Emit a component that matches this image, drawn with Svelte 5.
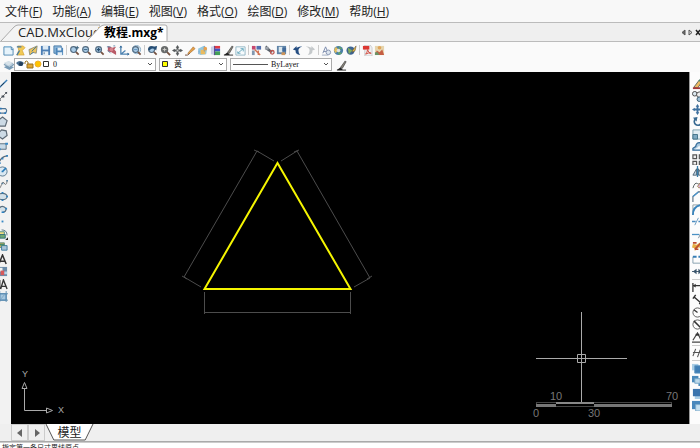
<script lang="ts">
    type Tool = { name: string; art: string } | null;

    const t = (name: string, art: string): Tool => ({ name, art });

    const lens = '<path d="M7.5 7.5l3 3" stroke="#765342" stroke-width="2"/><circle cx="5" cy="5" r="3.2" fill="#a9cbe6" stroke="#536b80" stroke-width="1.2"/>';
    const brush = '<path d="M1 11l4-3 2 2v1z" fill="#222"/><path d="M5 8l5-7 1 1-4 7z" fill="#8b877c" stroke="#333" stroke-width=".7"/><path d="M1 11h10" stroke="#222"/>';
    const disk = '<path d="M1 1h10v10H1z" fill="#4e7fb5"/><path d="M3 1h6v4H3z" fill="#dceaf5"/><path d="M3 7h6v4H3z" fill="#edf4f9"/><path d="M4 8h1v2H4z" fill="#39648f"/>';

    const menus = [
        ["文件", "F"], ["功能", "A"], ["编辑", "E"], ["视图", "V"],
        ["格式", "O"], ["绘图", "D"], ["修改", "M"], ["帮助", "H"],
    ];

    const mainTools: Tool[] = [
        t("New", '<path d="M1 2h8l2 2v7H1z" fill="#e6f3fb" stroke="#4b87b1"/><path d="M2 2h6" stroke="#8ec1df"/><path d="M9 2v3h2" fill="none" stroke="#4b87b1"/>'),
        t("Open", '<path d="M3 1h6l2 2-3 3 2 5H2l2-5z" fill="#f1c956" stroke="#ca9629" stroke-width=".6"/><path d="M2 2h5M2 11l3-5" stroke="#427aa7" stroke-width="1.4"/>'),
        t("Open cloud drawing", '<path d="M1 5l9-4-1 8-4-1-3 3z" fill="#edc45f" stroke="#6c736c" stroke-width=".7"/><path d="M4 7l5-5M3 10l3-2" stroke="#39749a"/>'),
        t("Save", disk),
        t("Save as", '<path d="M1 1h8v8H1z" fill="#8eb9dc" stroke="#4779a6"/><path d="M3 3h8v8H3z" fill="#4e86ba"/><path d="M5 3h4v3H5zM5 8h5v3H5z" fill="#e5f0f8"/>'),
        null,
        t("Zoom window", lens + '<path d="M9 1v4M7 3h4" stroke="#315b78"/>'),
        t("Zoom out", lens + '<path d="M3 5h4" stroke="#345c7b"/>'),
        t("Zoom in", lens + '<path d="M3 5h4M5 3v4" stroke="#294f70" stroke-width="1.4"/>'),
        t("Zoom extents", '<path d="M2 1v6l4 1 5 3V7L9 5l2-3-4 1z" fill="#b85a67"/><path d="M1 2h4M8 1h2M2 6l3 3" fill="none" stroke="#5687aa"/><circle cx="6" cy="5" r="2" fill="#d6838d"/>'),
        t("User coordinates", '<path d="M2 1v9h9M2 10l5-4" fill="none" stroke="#4e83b1" stroke-width="1.4"/><path d="M1 3l1-2 1 2M9 9l2 1-2 1" fill="none" stroke="#346a99"/>'),
        t("Zoom all", '<circle cx="6" cy="5" r="4.500" fill="#dce9f2" stroke="#8baec8"/>' + lens + '<path d="M3 5h4" stroke="#5e92bd"/>'),
        null,
        t("Zoom previous", lens + '<path d="M1 5q2-5 6-3l4-1-1 5-2-2q-4-1-5 2z" fill="#244d75"/>'),
        t("Zoom scale", '<path d="M7 7l4 4" stroke="#765342" stroke-width="2"/><circle cx="5" cy="5" r="4" fill="#686b6b"/><path d="M3 5h4M5 3v4" stroke="#d5d5d0"/>'),
        t("Pan", '<path d="M6 0l2 3H7v2h2V4l3 2-3 2V7H7v2h1l-2 3-2-3h1V7H3v1L0 6l3-2v1h2V3H4z" fill="#55595b"/><path d="M5 5h2v2H5z" fill="#ccc"/>'),
        t("Draw pencil", '<path d="M3 9l6-7 2 2-7 6z" fill="#e9a146" stroke="#926431" stroke-width=".6"/><path d="M0 11h3l2-2" fill="none" stroke="#6b4430"/>'),
        t("Colours", '<path d="M1 4l6-3 4 3-1 6-7 1z" fill="#93c8df"/><path d="M4 5l5 1v4H4z" fill="#ebbb5e"/><path d="M2 6v4M8 1v6" stroke="#6098c5"/><circle cx="9" cy="4" r="2" fill="#e8a04f"/>'),
        t("Layer colours", '<path d="M4 1h7v3H4z" fill="#e23b42"/><path d="M4 4h7v3H4z" fill="#4154c4"/><path d="M4 7h7v4H4z" fill="#43a057"/><path d="M1 2l4-1v10l-4-1z" fill="#c9cfe8"/><path d="M5 1v10" stroke="#503f88"/>'),
        t("Match properties", brush),
        t("Full screen", '<path d="M1 2h10v9H1z" fill="#f7fbfd" stroke="#92b6c4"/><path d="M3 9l6-5M6 4h3v3M3 7v2h3" fill="none" stroke="#66a8bc"/>'),
        null,
        t("Blocks", '<path d="M1 1h4v4H1z" fill="#c6476d"/><path d="M6 1h5v4H6z" fill="#526fae"/><path d="M1 6h3v5H1z" fill="#8198b0"/><path d="M4 5l6 6M8 6v5" stroke="#d17555" stroke-width="1.6"/>'),
        t("Cut", '<path d="M2 1l7 7M2 4l6 4" stroke="#596069" stroke-width="1.5"/><path d="M1 2h4v3H1z" fill="#9ba2ab"/><circle cx="9" cy="8" r="2" fill="none" stroke="#be5650" stroke-width="1.4"/>'),
        t("Insert image", '<path d="M1 1h10v9H1z" fill="#5f84a8"/><path d="M3 2h4v6H3z" fill="#dce8ee"/><path d="M7 3h4v4H7z" fill="#436b99"/><path d="M6 8h4v3H6z" fill="#ce955b"/>'),
        null,
        t("Undo", '<path d="M1 5l4-4v2q5-2 6-1-4 1-4 4 0 3 2 5Q3 10 4 6z" fill="#264e82"/>'),
        t("Redo", '<path d="M11 5L7 1v2Q2 1 1 2q4 1 4 4 0 3-2 5 6-1 5-5z" fill="#c5c9cb"/>'),
        null,
        t("Find", '<path d="M2 9l3-7 3 7M3 7h4" fill="none" stroke="#7485a9"/><circle cx="8" cy="8" r="2.500" fill="#dce5ef" stroke="#8391af"/><path d="M1 11h7" stroke="#99a9bf"/>'),
        t("Web", '<circle cx="6" cy="6" r="5" fill="#497fa5"/><path d="M3 2l3 3-3 4-2-3z" fill="#e3bd5d"/><path d="M6 1l4 3-3 1zM6 7l4 2-4 2z" fill="#64a562"/><circle cx="6" cy="6" r="2" fill="#e1e5df"/>'),
        t("Publish", '<circle cx="5" cy="6" r="4.500" fill="#3d6492"/><path d="M2 3l5 3-4 4z" fill="#82ad5b"/><path d="M7 6l4-5-1 5-3 2z" fill="#e5b641" stroke="#625338" stroke-width=".6"/>'),
        null,
        t("PDF", '<path d="M3 0h6l2 3v9H3z" fill="#eef0f1" stroke="#b2b2b3" stroke-width=".6"/><path d="M1 1h7v4H1z" fill="#dc3732"/><path d="M4 10q2-2 2-5 1 4 4 4-3-1-6 1" fill="none" stroke="#d1493d"/>'),
        t("Picture", '<path d="M1 1h10v10H1z" fill="#e6d5ae"/><path d="M1 11l2-5 3 2 3-3 2 6z" fill="#c65e43"/><path d="M1 8h3l2 3H1z" fill="#6c9366"/><circle cx="6" cy="3" r="2" fill="#e0a55b"/>'),
    ];

    const drawTools: Tool[] = [
        t("Line", '<path d="M1 11L11 1" stroke="#397eb9" stroke-width="1.6"/><path d="M4 8l4-4" stroke="#26394a"/>'),
        t("Construction line", '<path d="M1 11L11 1" stroke="#777"/><path d="M2 10h2M5 6h3M9 2h2" stroke="#454d57" stroke-width="2"/>'),
        t("Polyline", '<path d="M2 10h7q3-3 0-5H4" fill="none" stroke="#4f7494" stroke-width="1.3"/><path d="M3 5h2M2 10h2M8 10h2" stroke="#2a78bb" stroke-width="2"/>'),
        t("Polygon", '<path d="M6 1l5 4-2 6H3L1 5z" fill="#ccdae5" stroke="#5d6a76" stroke-width="1.3"/>'),
        t("Rotated polygon", '<path d="M5 1l5 1 1 5-5 4-4-3V4z" fill="#ccdae5" stroke="#5d6a76" stroke-width="1.3"/>'),
        t("Rectangle", '<path d="M1 3h9v6H1z" fill="#c7dae8" stroke="#576c7c"/><path d="M9 3h3M1 9h3" stroke="#388ac8" stroke-width="2"/>'),
        t("Arc", '<path d="M2 10Q4 3 11 2" fill="none" stroke="#596a77" stroke-width="1.3"/><path d="M1 10h3M5 5h2M10 2h2" stroke="#3382bf" stroke-width="2"/>'),
        t("Circle", '<circle cx="6" cy="6" r="5" fill="#dae8f2" stroke="#52738b"/><path d="M6 6l4-4M5 6h2" stroke="#277ab9" stroke-width="1.8"/>'),
        t("Spline", '<path d="M1 10q3 1 4-4t4 0q2 0 2-4" fill="none" stroke="#777"/><path d="M1 9v2M5 5h2M10 2h2" stroke="#5a82a0" stroke-width="1.6"/>'),
        t("Ellipse", '<ellipse cx="6" cy="6" rx="5" ry="3.500" fill="#d3e0e8" stroke="#596e7f" stroke-width="1.3"/><path d="M5 2h2M5 10h2M10 6h2" stroke="#2d81c1" stroke-width="1.7"/>'),
        t("Elliptical arc", '<path d="M2 5q4-5 8 0 0 4-4 4" fill="#d3e0e8" stroke="#596e7f" stroke-width="1.3"/><path d="M5 9h3M9 5h2" stroke="#2d81c1" stroke-width="1.8"/>'),
        t("Point", '<path d="M5 5h2v2H5z" fill="#3687c4"/>'),
        t("Insert block", '<path d="M5 1q6 0 6 6" fill="none" stroke="#547282"/><path d="M1 3h7v5H1z" fill="#f1dc80" stroke="#4a8b85"/><path d="M3 6h6v4H3z" fill="#70a875" stroke="#356f7d"/><path d="M12 9v3H9z" fill="#222"/>'),
        t("Make block", '<path d="M1 2h7v5H1z" fill="#d6b75b" stroke="#5a877b"/><path d="M5 5h6v5H5z" fill="#abc5d8" stroke="#3a789e"/><path d="M2 4h6" stroke="#478a69" stroke-width="2"/>'),
        t("Text", '<path d="M2 11L6 1l4 10M3 8h6" fill="none" stroke="#333" stroke-width="1.6"/>'),
        t("Hatch", '<path d="M1 1h10v10H1z" fill="#6a8caa"/><path d="M2 2h4v4H2z" fill="#f0f1f0"/><path d="M4 5h4v5H4z" fill="#d8595b"/><path d="M8 6h3v3H8z" fill="#b7d4e8"/>'),
        t("Multiline text", '<path d="M4 11L7 1l4 10M5 8h5M3 1v10" fill="none" stroke="#333" stroke-width="1.5"/>'),
        t("Boundary", '<path d="M3 3h7v7H3z" fill="#a6c7df" stroke="#3e7cae"/><path d="M3 0v12M10 0v12M1 3h11M1 10h11" stroke="#5b8bae"/><path d="M4 9l5-6" stroke="#7fa4c1"/>'),
    ];

    const editTools: Tool[] = [
        t("Erase", '<path d="M2 9l6-8 3 2-5 7z" fill="#edba62" stroke="#58635d"/><path d="M1 10h10" stroke="#a33a3b" stroke-width="2"/><path d="M8 1l3 3" stroke="#4b9170" stroke-width="2"/>'),
        t("Copy", '<circle cx="3" cy="3" r="2.500" fill="#dce8ef" stroke="#444"/><circle cx="8" cy="4" r="3" fill="#eee" stroke="#444"/><circle cx="8" cy="9" r="2.500" fill="#9ec0d6" stroke="#35566e"/>'),
        t("Move", '<path d="M6 0l2 3H7v2h2V4l3 2-3 2V7H7v2h1l-2 3-2-3h1V7H3v1L0 6l3-2v1h2V3H4z" fill="#3f719f"/>'),
        t("Rotate", '<path d="M4 3a4 4 0 1 0 5 0" fill="none" stroke="#376991" stroke-width="1.8"/><path d="M1 2l5-1-1 5z" fill="#376991"/>'),
        t("Scale", '<path d="M1 1h11v10H1z" fill="#e2edf2" stroke="#7b9fac"/><path d="M1 6h5v5H1z" fill="#7faac2" stroke="#427187"/>'),
        t("Offset", '<path d="M1 10V8l3-2q1-5 5-4l3 4v4z" fill="#a8c8df" stroke="#356b98" stroke-width="1.4"/><path d="M3 9l3-2 2-2 2 4z" fill="#f0f6f9"/>'),
        t("Array", '<path d="M1 1h4v4H1zM8 1h4v4H8zM1 8h4v4H1zM8 8h4v4H8z" fill="#eee" stroke="#555" stroke-width="1.3"/>'),
        t("Mirror", '<path d="M1 10l4-7v7zM11 10L7 3v7z" fill="#bfd2e0" stroke="#4c6172"/><path d="M6 0v12" stroke="#377ca9" stroke-width="1.4"/>'),
        t("Edit polyline", '<path d="M1 10q2-7 5-5t4-3" fill="none" stroke="#4d5759"/><path d="M6 8l4-5 2 2-4 5z" fill="#d8b3d8" stroke="#a7824b"/>'),
        t("Chamfer", '<path d="M1 12V6l6-5h5" fill="none" stroke="#566b7c" stroke-width="1.2"/><path d="M1 6l6-5" stroke="#4a95cc" stroke-width="1.4"/>'),
        t("Fillet", '<path d="M1 1v11M1 1h11" stroke="#8d9a9f"/><path d="M1 12Q1 1 12 1" fill="none" stroke="#3a85bd" stroke-width="2"/>'),
        t("Trim", '<path d="M0 6h4M7 6h5" stroke="#4c8cc0" stroke-width="1.4"/><path d="M3 10l4-8" stroke="#6496bd"/>'),
        t("Extend", '<path d="M0 6h8" stroke="#4b91c4" stroke-width="1.4"/><path d="M7 10l4-8" stroke="#778a99"/>'),
        t("Explode", '<path d="M1 3l4 1 5-3-2 4 3 3-4-1-4 4V8L0 7z" fill="#e5ae45"/><path d="M3 9l7-7M1 2h4M3 9h4" stroke="#ba4b32" stroke-width="1.8"/>'),
        t("Break", '<path d="M1 3v7h11V3" fill="none" stroke="#829dac"/><path d="M1 3h4M7 3h5" stroke="#367eb5" stroke-width="2"/>'),
        t("Stretch", '<path d="M0 6h12" stroke="#3d5467"/><path d="M5 3v6L1 6zM7 3v6l4-3z" fill="#39546b"/>'),
        null,
        t("Linear dimension", '<path d="M1 1v10M1 4h11" stroke="#333" stroke-width="1.4"/><path d="M4 2v4L1 4z" fill="#333"/>'),
        t("Aligned dimension", '<path d="M2 3l8 7M1 5l3-4M8 11l3-4" stroke="#333" stroke-width="1.6"/>'),
        t("Radius dimension", '<circle cx="6" cy="6" r="5" fill="none" stroke="#555"/><path d="M6 6L2 3" stroke="#333" stroke-width="1.4"/>'),
        t("Diameter dimension", '<circle cx="6" cy="6" r="5" fill="none" stroke="#555"/><path d="M2 2l8 8" stroke="#333" stroke-width="1.7"/>'),
        t("Angular dimension", '<path d="M0 11h12M1 9l5-8 4 8" fill="none" stroke="#444" stroke-width="1.3"/><path d="M4 3h4" stroke="#333" stroke-width="2"/>'),
        null,
        t("Continue dimension", '<path d="M1 10l3-8M1 6h10M6 11l3-8M10 3h2" fill="none" stroke="#555" stroke-width="1.2"/>'),
        null,
        t("Bring to front", '<path d="M0 1h7v7H0z" fill="#a9cde6"/><path d="M3 3h8v8H3z" fill="#3f7eb5" stroke="#5c95c2"/>'),
        t("Send to back", '<path d="M0 1h7v7H0z" fill="#4b8abb"/><path d="M7 7h5v5H7z" fill="#4b8abb"/><path d="M3 4h6v5H3z" fill="#bedaeb" stroke="#73a4c6"/>'),
        t("Bring above", '<path d="M3 4h9v8H3z" fill="#a9cde6"/><path d="M1 1h9v8H1z" fill="#3973ad"/>'),
        t("Send under", '<path d="M0 1h11v9H0z" fill="#4987bc"/><path d="M4 5h8v7H4z" fill="#c5dfef" stroke="#7eabca"/>'),
    ];
</script>

{#snippet icon(art: string)}
    <svg class="icon" viewBox="0 0 12 12" aria-hidden="true">{@html art}</svg>
{/snippet}

{#snippet tools(items: Tool[])}
    {#each items as item}
        {#if item}
            <button class="tool" aria-label={item.name}>{@render icon(item.art)}</button>
        {:else}
            <span class="separator"></span>
        {/if}
    {/each}
{/snippet}

{#snippet chevron()}
    <svg class="chevron" viewBox="0 0 6 4" aria-hidden="true"><path d="M1 1l2 2 2-2" fill="none" stroke="#555" /></svg>
{/snippet}

<div class="app">
    <nav class="menu">
        {#each menus as [label, key]}
            <button>{label}(<u>{key}</u>)</button>
        {/each}
    </nav>

    <div class="documents">
        <button class="document">
            <svg class="shape" viewBox="0 0 100 17" preserveAspectRatio="none" aria-hidden="true">
                <path d="M1 17L14 3Q16 1 18 1H100V17" fill="#f4f4f4" stroke="#aaa" />
            </svg>
            <span>CAD.MxCloud</span>
        </button>
        <button class="document active">
            <svg class="shape" viewBox="0 0 82 17" preserveAspectRatio="none" aria-hidden="true">
                <path d="M1 17L14 3Q16 1 18 1H79Q81 1 81 3V17" fill="#fff" stroke="#aaa" />
            </svg>
            <span>教程.mxg*</span>
        </button>
        <div class="pager">
            <button aria-label="Previous drawing">
                <svg viewBox="0 0 5 7"><path d="M4 1v5L1 3.500z" fill="#666" stroke="#555" /></svg>
            </button>
            <button aria-label="Next drawing">
                <svg viewBox="0 0 5 7"><path d="M1 1v5l3-2.500z" fill="#ddd" stroke="#555" /></svg>
            </button>
            <button aria-label="Close drawing">
                <svg viewBox="0 0 5 7"><path d="M1 1l4 5M5 1L1 6" stroke="#222" stroke-width="1.5" /></svg>
            </button>
        </div>
    </div>

    <div class="toolbar">{@render tools(mainTools)}</div>

    <div class="properties">
        <button class="tool" aria-label="Layers">
            {@render icon('<path d="M1 8l5-3 6 3-5 3z" fill="#789bb7"/><path d="M1 5l5-3 6 3-5 3z" fill="#b9cedd" stroke="#7797af"/><path d="M1 3l5-2 5 2-5 3z" fill="#d7e2e9"/>')}
        </button>
        <div class="field layer">
            <svg class="mark" viewBox="0 0 34 10" aria-hidden="true">
                <path d="M0 4q4-4 8 0l-2 3H3z" fill="#496f91" />
                <circle cx="5" cy="5" r="2" fill="#243e5b" />
                <path d="M9 5V3q1-2 3 0v2" fill="none" stroke="#997322" />
                <path d="M11 5h6v4h-6z" fill="#e0a52f" stroke="#997322" />
                <circle cx="22" cy="5" r="3" fill="#ffc400" stroke="#f0b030" />
                <path d="M27.500 2.500h5v5h-5z" fill="#fff" stroke="#333" />
            </svg>
            <select aria-label="Layer"><option>0</option></select>
            {@render chevron()}
        </div>
        <div class="field colour">
            <svg class="mark" viewBox="0 0 8 10" aria-hidden="true"><path d="M1.500 2.500h5v5h-5z" fill="#ff0" stroke="#333" /></svg>
            <select aria-label="Colour"><option>黄</option></select>
            {@render chevron()}
        </div>
        <div class="field linetype">
            <svg class="mark" viewBox="0 0 36 10" aria-hidden="true"><path d="M1 5.500h35" stroke="#555" /></svg>
            <select aria-label="Line type"><option>ByLayer</option></select>
            {@render chevron()}
        </div>
        <button class="tool" aria-label="Match properties">{@render icon(brush)}</button>
    </div>

    <div class="workspace">
        <div class="side draw">{@render tools(drawTools)}</div>

        <main>
            <svg class="drawing" viewBox="11 72 678 352" preserveAspectRatio="xMinYMin meet">
                <g fill="none" stroke="#4c4c4c">
                    <path d="M274 161l-17-10-73 126 17 10M254 150l5 2M182 276l5 3" />
                    <path d="M281 161l16-10 73 127-16 9M294 152l5-2M367 279l5-3" />
                    <path d="M204.500 292v22M350.500 292v22M204 312.500h147" />
                </g>
                <path d="M277.500 163L204.500 289H350.500z" fill="none" stroke="#f5f500" stroke-width="2" />

                <path d="M24.500 389v21.500H46M22 388.500l2.500-6 2.500 6zM46.500 408l6 2.500-6 2.500z" fill="none" stroke="#aaa" />
                <g class="axis">
                    <text x="25" y="377">Y</text>
                    <text x="61" y="413">X</text>
                </g>

                <path d="M581.500 312v91M536 358.500h91M577.500 354.500h8v8h-8z" fill="none" stroke="#aaa" />

                <path d="M536 402.500h136M536.500 402v5M671.500 402v5" stroke="#444" />
                <path d="M536 405.500h20M594 405.500h78" stroke="#777" stroke-width="3" />
                <path d="M556 403h38" stroke="#888" stroke-width="2" />
                <path d="M556 406.500h38" stroke="#444" />
                <g class="scale">
                    <text x="556" y="400">10</text>
                    <text x="672" y="400">70</text>
                    <text x="536" y="417">0</text>
                    <text x="594" y="417">30</text>
                </g>
            </svg>
        </main>

        <div class="side edit">{@render tools(editTools)}</div>
    </div>

    <div class="layouts">
        <button class="step" aria-label="Previous layout">
            <svg viewBox="0 0 6 8"><path d="M5 0v8L0 4z" fill="#666" /></svg>
        </button>
        <button class="step" aria-label="Next layout">
            <svg viewBox="0 0 6 8"><path d="M1 0v8l5-4z" fill="#666" /></svg>
        </button>
        <button class="layout">
            <svg class="shape" viewBox="0 0 50 17" preserveAspectRatio="none" aria-hidden="true">
                <path d="M1 0l8 16h32l8-16" fill="#fff" stroke="#555" />
            </svg>
            <span>模型</span>
        </button>
    </div>

    <div class="command">指定第一条尺寸界线原点</div>
</div>

<style>
    :global(body) {
        margin: 0;
    }

    .app {
        display: flex;
        flex-direction: column;
        height: 100vh;
        overflow: hidden;
        background: #fafafa;
        color: #222;
        font-family: "Open Sans", "Noto Sans CJK SC", sans-serif;
        font-size: 12px;
    }

    button {
        margin: 0;
        padding: 0;
        border: 0;
        background: none;
        color: inherit;
        font: inherit;
    }

    svg {
        display: block;
    }

    .menu {
        display: flex;
        flex: none;
        gap: 10px;
        height: 22px;
        padding: 0 5px;
        background: #f8f8f8;
        border-bottom: 1px solid #bbb;

        & button {
            line-height: 24px;
            white-space: nowrap;
        }
    }

    .documents {
        display: flex;
        flex: none;
        align-items: flex-end;
        height: 18px;
        background: #efefef;
        border-bottom: 1px solid #bbb;
    }

    .document {
        position: relative;
        height: 17px;
        width: 100px;
        padding-left: 18px;
        font-size: 13px;
        line-height: 17px;
        text-align: left;
        white-space: nowrap;

        & span {
            position: relative;
        }

        &.active {
            width: 82px;
            margin-left: -14px;
            color: #000;
            font-size: 12px;
            font-weight: bold;
        }
    }

    .shape {
        position: absolute;
        inset: 0;
        width: 100%;
        height: 100%;
    }

    .pager {
        display: flex;
        gap: 2px;
        margin-left: auto;
        align-self: center;

        & svg {
            width: 5px;
            height: 7px;
        }
    }

    .toolbar {
        display: flex;
        flex: none;
        width: 384px;
        height: 16px;
        padding-left: 2px;
    }

    .tool {
        display: flex;
        flex: 25 0 0;
        align-items: center;
        justify-content: center;
        min-width: 0;
        min-height: 0;
    }

    .icon {
        flex: none;
        width: 11px;
        height: 11px;
    }

    .separator {
        flex: 7 0 0;
        background: linear-gradient(#ccc, #ccc) center / 1px 10px no-repeat;
    }

    .properties {
        display: flex;
        flex: none;
        height: 14px;
        padding: 0 2px;

        & .tool {
            flex: none;
            width: 12px;
        }
    }

    .field {
        position: relative;
        margin-right: 3px;

        & select {
            box-sizing: border-box;
            display: block;
            width: 100%;
            height: 13px;
            margin: 0;
            border: 1px solid #aaa;
            border-radius: 0;
            background: #fff;
            color: #111;
            appearance: none;
            font: 8px/11px "Liberation Serif", "Noto Sans CJK SC", serif;
        }

        & .mark,
        & .chevron {
            position: absolute;
            top: 1px;
            left: 2px;
            height: 10px;
            pointer-events: none;
        }

        & .chevron {
            left: auto;
            right: 3px;
            width: 6px;
        }
    }

    .layer {
        width: 142px;

        & select {
            padding-left: 38px;
        }
    }

    .colour {
        width: 68px;

        & select {
            padding-left: 14px;
        }
    }

    .linetype {
        width: 102px;

        & select {
            padding-left: 40px;
        }
    }

    .workspace {
        display: flex;
        flex: 1;
        min-height: 0;
        background: linear-gradient(90deg, #f2f2f2 50%, #fcfcfc 50%);
    }

    main {
        flex: 1;
        min-width: 0;
        border-right: 1px solid #999;
        background: #000;
        overflow: hidden;
    }

    .drawing {
        width: 100%;
        height: 100%;
    }

    .axis {
        fill: #aaa;
        font: 9px "Liberation Sans", sans-serif;
        text-anchor: middle;
    }

    .scale {
        fill: #777;
        font: 11px "Liberation Sans", sans-serif;
        text-anchor: middle;
    }

    .side {
        display: flex;
        flex: none;
        flex-direction: column;
        box-sizing: border-box;
        width: 11px;
        padding-top: 6px;
        overflow: hidden;

        & .tool {
            justify-content: flex-start;
        }

        & .separator {
            flex: 6 0 0;
            background: linear-gradient(#ccc, #ccc) center / 100% 1px no-repeat;
        }
    }

    .draw {
        height: 231px;

        & .tool {
            margin-left: -3px;
        }
    }

    .edit {
        width: 10px;
        height: 340px;
        padding-left: 2px;
    }

    .layouts {
        display: flex;
        flex: none;
        height: 17px;
        padding-left: 11px;
        background: #efefef;
        border-bottom: 1px solid #aaa;
    }

    .step {
        display: flex;
        align-items: center;
        justify-content: center;
        box-sizing: border-box;
        width: 17px;
        border: 1px solid #ccc;

        & svg {
            width: 6px;
            height: 8px;
        }
    }

    .layout {
        position: relative;
        width: 49px;
        line-height: 18px;

        & span {
            position: relative;
        }
    }

    .command {
        flex: none;
        height: 5px;
        padding-left: 2px;
        border-top: 1px solid #ccc;
        background: #fff;
        color: #222;
        font-size: 7px;
        line-height: 9px;
        overflow: hidden;
    }
</style>
